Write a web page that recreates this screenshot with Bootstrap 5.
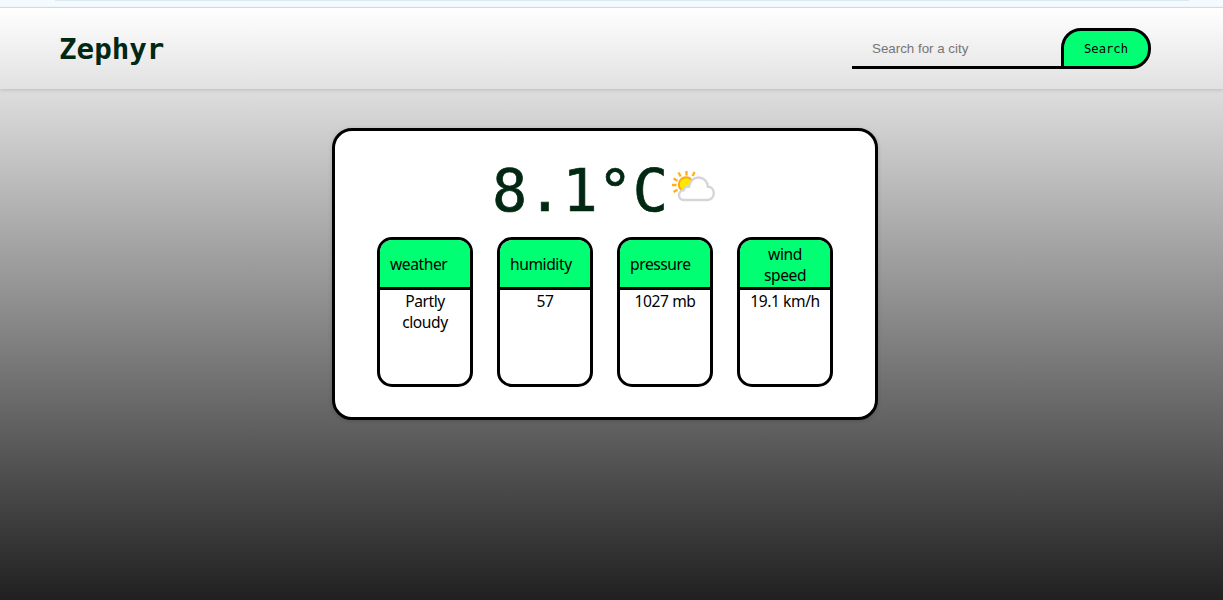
<!DOCTYPE html>
<html lang="en">
<head>
<meta charset="utf-8">
<meta name="viewport" content="width=device-width, initial-scale=1">
<title>Zephyr</title>
<link rel="stylesheet" href="https://cdn.jsdelivr.net/npm/bootstrap@5.3.0/dist/css/bootstrap.min.css">
<style>
  body { height: 600px; overflow: hidden; color: #000; background: linear-gradient(#fcfcfc 8px, #202020 600px); font: 15.6px/21px "Noto Sans", sans-serif; letter-spacing: -.42px; }
  .top-strip { height: 8px; background: #f4fafd; border-bottom: 1px solid #d9e3e6; }
  .top-strip div { height: 1px; margin: 0 34px 0 55px; background: #d8eaef; }
  .site-bar { height: 81px; padding: 0 72px 0 59px; background: linear-gradient(#fff, #e1e1e1); box-shadow: 0 1px 4px rgba(0,0,0,.16); }
  .mono { font-family: "DejaVu Sans Mono", monospace; color: #002812; letter-spacing: 0; }
  .site-name { font-size: 29.2px; line-height: 40px; }
  .city { width: 209px; height: 41px; padding: 2px 20px 0; border: 0; border-bottom: 3px solid #000; background: none; outline: 0; font: 13.33px "Liberation Sans", sans-serif; letter-spacing: 0; }
  .city::placeholder { color: #757575; opacity: 1; }
  .go { width: 90px; height: 41px; padding: 1px 0 0; border: 3px solid #000 !important; border-radius: 20px 20px 20px 0; background: #00ff73 !important; color: #000 !important; font: 12.2px "DejaVu Sans Mono", monospace; letter-spacing: 0; }
  .report { width: 546px; height: 292px; margin: 39px 0 0 332px; padding: 29px 42px 0; border: 3px solid #000; border-radius: 20px; background: #fff; box-shadow: 0 1px 4px rgba(0,0,0,.16); }
  .temp { height: 60px; margin-bottom: 17px; }
  .degrees { padding-top: 1px; font-size: 58.5px; line-height: 60px; -webkit-text-stroke: .7px #002812; }
  .tile { width: 96px; height: 150px; border: 3px solid #000; border-radius: 15px; }
  .tile-head { height: 50px; padding: 2px 10px 0; border-bottom: 3px solid #000; background: #00ff73; }
  .tile-body { padding: 1px 8px; }
</style>
</head>
<body>
<div class="top-strip"><div></div></div>
<nav class="site-bar d-flex align-items-center justify-content-between">
  <span class="site-name mono fw-bold">Zephyr</span>
  <form class="d-flex">
    <input class="city" type="text" placeholder="Search for a city" aria-label="City">
    <button class="btn go" type="button">Search</button>
  </form>
</nav>
<main class="report">
  <div class="temp d-flex justify-content-center">
    <span class="degrees mono">8.1°C</span>
    <svg width="50" height="60" viewBox="-1.500 0 50 60" fill="none" aria-hidden="true">
      <g stroke="#ffb015" stroke-width="2.300">
        <path d="M17 11v4.500M25 12l-1.800 4M9 12.500l2.200 4M4 18.500l4 2.200M2.500 25h4.500M4 32l4-2.200"/>
      </g>
      <circle cx="16.500" cy="24.500" r="7.200" fill="#ffe600" stroke="#ffa912" stroke-width="2"/>
      <path d="M14.500 40c-3.500 0-5-2.400-5-4.700 0-2.600 2-4.800 4.500-5 .8-2.700 3-4 5.500-3.600 1-5.200 4.500-9.200 9.600-9.200 5 0 9 3.800 9.200 9 3.500.2 6 3 6 6.600 0 3.900-2.600 6.900-6.500 6.900z" fill="#fff" stroke="#d5d5d8" stroke-width="2.400"/>
    </svg>
  </div>
  <div class="d-flex gap-4">
    <section class="tile overflow-hidden"><div class="tile-head d-flex align-items-center">weather</div><div class="tile-body text-center">Partly cloudy</div></section>
    <section class="tile overflow-hidden"><div class="tile-head d-flex align-items-center">humidity</div><div class="tile-body text-center">57</div></section>
    <section class="tile overflow-hidden"><div class="tile-head d-flex align-items-center">pressure</div><div class="tile-body text-center">1027 mb</div></section>
    <section class="tile overflow-hidden"><div class="tile-head d-flex align-items-center text-center">wind speed</div><div class="tile-body text-center px-0">19.1 km/h</div></section>
  </div>
</main>
<script src="https://cdn.jsdelivr.net/npm/bootstrap@5.3.0/dist/js/bootstrap.bundle.min.js"></script>
</body>
</html>
